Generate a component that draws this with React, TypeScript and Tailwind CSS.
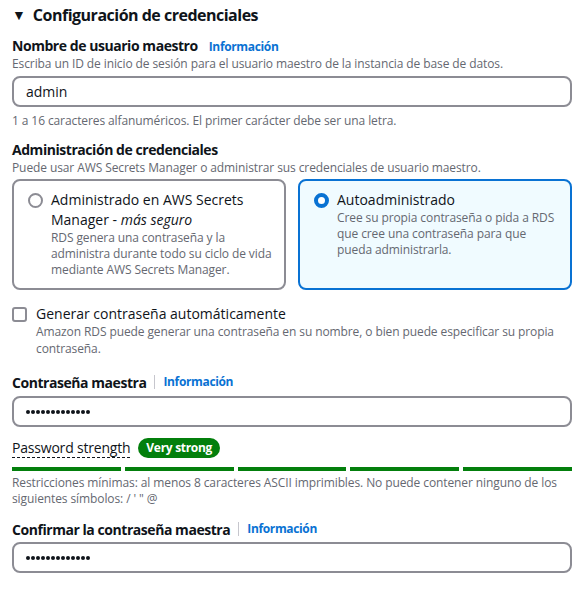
import React from "react";

const Info = () => (
  <a className="text-[12px] font-bold tracking-[-0.35px] text-[#0972d3] cursor-pointer">Información</a>
);

const Dots = () => (
  <div className="flex gap-[1px]">
    {Array.from({ length: 13 }).map((_, i) => (
      <span key={i} className="w-[4px] h-[4px] rounded-full bg-[#0f141a]" />
    ))}
  </div>
);

const TextInput = ({ value, password }: { value: string; password?: boolean }) => (
  <div className="h-[31px] border-2 border-[#8c8c94] rounded-lg flex items-center px-[12px]">
    {password ? <Dots /> : <span className="text-[14px] text-[#0f141a]">{value}</span>}
  </div>
);

const App = () => {
  return (
    <div
      className="w-[584px] h-[594px] bg-white text-[#0f141a] px-[12px] pt-[2px]"
      style={{ fontFamily: '"Open Sans", "Noto Sans", sans-serif' }}
    >
      {/* Header */}
      <div className="flex items-center gap-[7px] h-[26px]">
        <span className="text-[14px] leading-none">▼</span>
        <h2 className="text-[16px] font-bold tracking-[-0.5px]">Configuración de credenciales</h2>
      </div>

      {/* Username */}
      <div className="mt-[7px]">
        <div className="flex items-baseline gap-[11px]">
          <span className="text-[14px] font-bold tracking-[-0.45px]">Nombre de usuario maestro</span>
          <Info />
        </div>
        <p className="text-[12px] text-[#656871] leading-[16px] tracking-[-0.1px]">
          Escriba un ID de inicio de sesión para el usuario maestro de la instancia de base de datos.
        </p>
        <div className="mt-[4px]">
          <TextInput value="admin" />
        </div>
        <p className="text-[12px] text-[#656871] leading-[16px] mt-[6px] tracking-[-0.1px]">
          1 a 16 caracteres alfanuméricos. El primer carácter debe ser una letra.
        </p>
      </div>

      {/* Credentials management */}
      <div className="mt-[11px]">
        <div className="text-[14px] font-bold leading-[20px] tracking-[-0.45px]">Administración de credenciales</div>
        <p className="text-[12px] text-[#656871] leading-[16px] tracking-[-0.1px]">
          Puede usar AWS Secrets Manager o administrar sus credenciales de usuario maestro.
        </p>
        <div className="grid grid-cols-2 gap-[12px] mt-[3px]">
          <div className="border-2 border-[#8c8c94] rounded-lg h-[111px] pl-[14px] pr-[10px] pt-[9px] flex gap-[8px]">
            <span className="mt-[3px] w-[15px] h-[15px] rounded-full border-2 border-[#8c8c94] shrink-0" />
            <div>
              <div className="text-[14px] leading-[20px]">
                Administrado en AWS Secrets Manager - <i>más seguro</i>
              </div>
              <p className="text-[12px] text-[#656871] leading-[16px] tracking-[-0.1px]">
                RDS genera una contraseña y la administra durante todo su ciclo de vida mediante AWS Secrets Manager.
              </p>
            </div>
          </div>
          <div className="border-2 border-[#0972d3] bg-[#f0fbff] rounded-lg h-[111px] pl-[14px] pr-[10px] pt-[9px] flex gap-[8px]">
            <span className="mt-[3px] w-[15px] h-[15px] rounded-full border-[4px] border-[#0972d3] bg-white shrink-0" />
            <div>
              <div className="text-[14px] leading-[20px]">Autoadministrado</div>
              <p className="text-[12px] text-[#656871] leading-[16px] tracking-[-0.1px]">
                Cree su propia contraseña o pida a RDS que cree una contraseña para que pueda administrarla.
              </p>
            </div>
          </div>
        </div>
      </div>

      {/* Auto-generate */}
      <div className="mt-[15px] flex gap-[9px]">
        <span className="mt-[2px] w-[15px] h-[15px] rounded-[3px] border-2 border-[#8c8c94] shrink-0" />
        <div>
          <div className="text-[14px] leading-[18px]">Generar contraseña automáticamente</div>
          <p className="text-[12px] text-[#656871] leading-[17px] tracking-[-0.1px]">
            Amazon RDS puede generar una contraseña en su nombre, o bien puede especificar su propia contraseña.
          </p>
        </div>
      </div>

      {/* Master password */}
      <div className="mt-[15px]">
        <div className="flex items-center h-[20px]">
          <span className="text-[14px] font-bold tracking-[-0.45px]">Contraseña maestra</span>
          <span className="mx-[8px] w-px h-[14px] bg-[#c6c6cd]" />
          <Info />
        </div>
        <div className="mt-[4px]">
          <TextInput value="" password />
        </div>
        <div className="flex items-center gap-[8px] mt-[11px]">
          <span className="text-[14px] border-b border-dashed border-[#0f141a] leading-[18px] tracking-[-0.2px]">
            Password strength
          </span>
          <span className="bg-[#037f0c] text-white text-[12px] font-bold tracking-[-0.3px] rounded-full px-[8px] leading-[20px]">
            Very strong
          </span>
        </div>
        <div className="grid grid-cols-5 gap-[4px] mt-[9px]">
          {[0, 1, 2, 3, 4].map((i) => (
            <div key={i} className="h-[4px] bg-[#037f0c]" />
          ))}
        </div>
        <p className="text-[12px] text-[#656871] leading-[16px] mt-[4px] tracking-[-0.1px]">
          Restricciones mínimas: al menos 8 caracteres ASCII imprimibles. No puede contener ninguno de los siguientes símbolos: / ' " @
        </p>
      </div>

      {/* Confirm */}
      <div className="mt-[12px]">
        <div className="flex items-center h-[20px]">
          <span className="text-[14px] font-bold tracking-[-0.45px]">Confirmar la contraseña maestra</span>
          <span className="mx-[8px] w-px h-[14px] bg-[#c6c6cd]" />
          <Info />
        </div>
        <div className="mt-[3px]">
          <TextInput value="" password />
        </div>
      </div>
    </div>
  );
};

export default App;
